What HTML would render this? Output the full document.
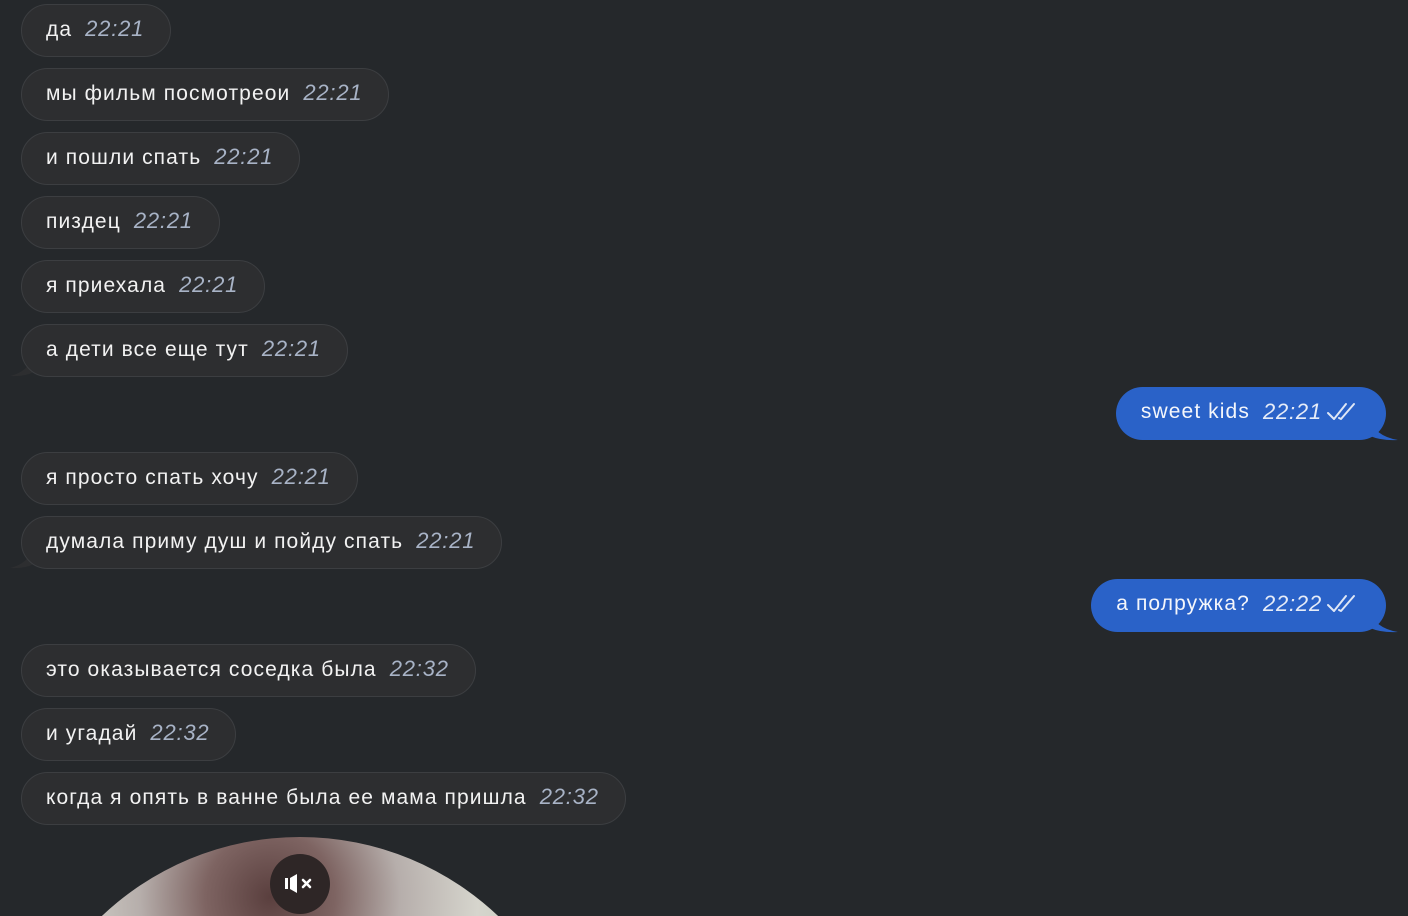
<!DOCTYPE html><html><head><meta charset="utf-8"><style>
html,body{margin:0;width:1408px;height:916px;overflow:hidden}
body{background:#25282b;position:relative;font-family:"Liberation Sans",sans-serif}
.b{position:absolute;left:21px;height:51px;border:1px solid #3c3e41;background:#2d2e30;border-radius:27px;color:#f2f2f2;font-size:21px;line-height:48px;padding:0 26px 3px 24px;box-sizing:border-box;height:53px;white-space:nowrap;letter-spacing:1.1px}
.t{font-style:italic;color:#a8b3c6;margin-left:13px;font-size:22px;letter-spacing:.8px}
.tail{position:absolute;left:10px}
.o{position:absolute;right:22px;height:53px;background:#2a62c8;border-radius:27px;color:#f4f6fb;font-size:21px;line-height:50px;padding:0 28px 3px 25px;box-sizing:border-box;white-space:nowrap;letter-spacing:1.1px;display:flex;align-items:center}
.o .t{color:#e6ecf8}
.o svg{margin-left:4px}
</style></head><body>
<div class="b" style="top:4px">да<span class="t">22:21</span></div>
<div class="b" style="top:68px">мы фильм посмотреои<span class="t">22:21</span></div>
<div class="b" style="top:132px">и пошли спать<span class="t">22:21</span></div>
<div class="b" style="top:196px">пиздец<span class="t">22:21</span></div>
<div class="b" style="top:260px">я приехала<span class="t">22:21</span></div>
<svg class="tail" style="top:355px" width="30" height="24"><path d="M22 0 Q20 16 0 21 Q14 22 24 17 Z" fill="#2d2e30"/></svg>
<div class="b" style="top:324px">а дети все еще тут<span class="t">22:21</span></div>
<div class="b" style="top:452px">я просто спать хочу<span class="t">22:21</span></div>
<svg class="tail" style="top:547px" width="30" height="24"><path d="M22 0 Q20 16 0 21 Q14 22 24 17 Z" fill="#2d2e30"/></svg>
<div class="b" style="top:516px">думала приму душ и пойду спать<span class="t">22:21</span></div>
<div class="b" style="top:644px">это оказывается соседка была<span class="t">22:32</span></div>
<div class="b" style="top:708px">и угадай<span class="t">22:32</span></div>
<div class="b" style="top:772px">когда я опять в ванне была ее мама пришла<span class="t">22:32</span></div>

<svg style="position:absolute;left:1370px;top:418px" width="30" height="24"><path d="M0 0 Q4 18 28 22 Q12 23 0 18 Z" fill="#2a62c8"/></svg>
<div class="o" style="top:387px">sweet kids<span class="t">22:21</span><svg width="32" height="22"><path d="M2 12 L8 18 L20 3 M13 17 L15 18 L28 3" stroke="#dfe7f6" stroke-width="2" fill="none" stroke-linecap="round" stroke-linejoin="round"/></svg></div>
<svg style="position:absolute;left:1370px;top:610px" width="30" height="24"><path d="M0 0 Q4 18 28 22 Q12 23 0 18 Z" fill="#2a62c8"/></svg>
<div class="o" style="top:579px">а полружка?<span class="t">22:22</span><svg width="32" height="22"><path d="M2 12 L8 18 L20 3 M13 17 L15 18 L28 3" stroke="#dfe7f6" stroke-width="2" fill="none" stroke-linecap="round" stroke-linejoin="round"/></svg></div>

<svg style="position:absolute;left:0;top:837px" width="600" height="79">
<defs><radialGradient id="g" cx="270" cy="60" r="260" gradientUnits="userSpaceOnUse">
<stop offset="0" stop-color="#5a3f3e"/><stop offset=".25" stop-color="#7e6462"/><stop offset=".5" stop-color="#b6aeab"/><stop offset=".8" stop-color="#d6d5cd"/><stop offset="1" stop-color="#c9cbbf"/></radialGradient></defs>
<circle cx="300" cy="288" r="288" fill="url(#g)"/></svg>
<div style="position:absolute;left:270px;top:854px;width:60px;height:60px;border-radius:50%;background:#2e2626"></div>
<svg style="position:absolute;left:284px;top:873px" width="34" height="22"><rect x="1" y="5" width="3" height="11" fill="#fff"/><path d="M6 5 L13 1 L13 20 L6 16 Z" fill="#fff"/><path d="M19 7 L26 14 M26 7 L19 14" stroke="#fff" stroke-width="2.6" stroke-linecap="round"/></svg>
</body></html>
